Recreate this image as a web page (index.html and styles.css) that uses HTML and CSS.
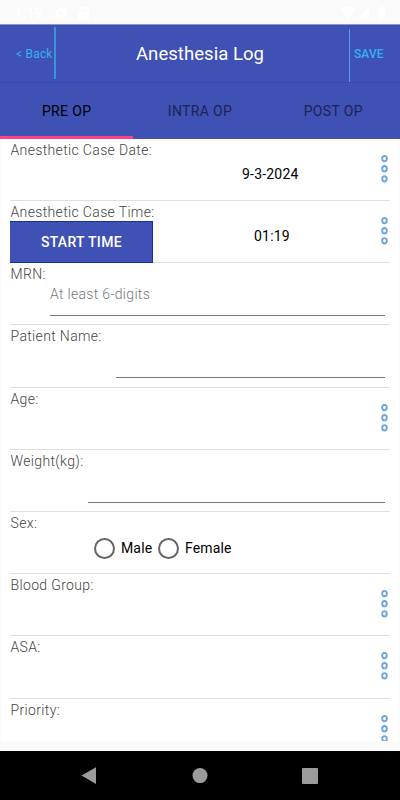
FILE: index.html
```html
<!DOCTYPE html>
<html lang="en">
<head>
<meta charset="utf-8">
<title>Anesthesia Log</title>
<link rel="stylesheet" href="styles.css">
</head>
<body>
<svg class="defs" width="0" height="0" aria-hidden="true">
  <symbol id="more" viewBox="0 0 10 32">
    <g fill="#fff" stroke="#6fa5d8" stroke-width="1.9" stroke-linejoin="round">
      <ellipse cx="4.5" cy="5.6" rx="2.3" ry="2.7"/>
      <ellipse cx="4.5" cy="15.7" rx="2.3" ry="2.7"/>
      <ellipse cx="4.5" cy="25.8" rx="2.3" ry="2.7"/>
    </g>
  </symbol>
</svg>
<div class="status">
  <span class="clock">1:19</span>
  <svg class="gear" width="14" height="14" viewBox="0 0 14 14"><circle cx="7" cy="7" r="3.7" fill="none" stroke="#fff" stroke-width="3"/><circle cx="7" cy="7" r="5.3" fill="none" stroke="#fff" stroke-width="2" stroke-dasharray="3 2.55"/></svg>
  <svg class="card" width="11" height="13" viewBox="0 0 11 13"><path fill="#fff" d="M4 0h6q1 0 1 1v11q0 1-1 1H1q-1 0-1-1V4z"/><path stroke="#f6f6f6" d="M4.5 2v2.5M6.5 2v2.5M8.5 2v2.5"/></svg>
  <svg class="signals" width="46" height="14" viewBox="0 0 46 14"><path fill="#fff" d="M0 3Q8-3 16 3L8 13ZM29 1v12H17ZM38 2h2V0h3v2h2v11h-7z"/></svg>
</div>
<header class="bar">
  <span class="back">&lt; Back</span>
  <h1>Anesthesia Log</h1>
  <span class="save">SAVE</span>
</header>
<nav class="tabs">
  <span class="tab active">PRE OP</span><span class="tab">INTRA OP</span><span class="tab">POST OP</span>
</nav>
<main class="form">
  <section class="row"><label>Anesthetic Case Date:</label><span class="value date">9-3-2024</span><svg class="more"><use href="#more"/></svg></section>
  <section class="row"><label>Anesthetic Case Time:</label><button class="start">START TIME</button><span class="value time">01:19</span><svg class="more"><use href="#more"/></svg></section>
  <section class="row"><label>MRN:</label><div class="input mrn">At least 6-digits</div></section>
  <section class="row"><label>Patient Name:</label><div class="input name"></div></section>
  <section class="row"><label>Age:</label><svg class="more"><use href="#more"/></svg></section>
  <section class="row"><label>Weight(kg):</label><div class="input weight"></div></section>
  <section class="row"><label>Sex:</label><div class="radios"><i class="radio"></i><span class="male">Male</span><i class="radio"></i><span>Female</span></div></section>
  <section class="row"><label>Blood Group:</label><svg class="more"><use href="#more"/></svg></section>
  <section class="row"><label>ASA:</label><svg class="more"><use href="#more"/></svg></section>
  <section class="row"><label>Priority:</label><svg class="more"><use href="#more"/></svg></section>
</main>
<footer class="nav">
  <svg width="400" height="49" viewBox="0 0 400 49"><g fill="#9b9b9b"><path d="M81.5 24.6 96 16.3V33Z"/><circle cx="200" cy="24.6" r="7.5"/><rect x="302" y="17" width="16" height="16" rx="1"/></g></svg>
</footer>
</body>
</html>
```
FILE: styles.css
```css
* { box-sizing: border-box; }
body {
  margin: 0;
  width: 400px;
  height: 800px;
  overflow: hidden;
  display: flex;
  flex-direction: column;
  background: #fafafa;
  font-family: Roboto, "Liberation Sans", sans-serif;
  font-size: 14px;
}
.defs { position: absolute; }
.status {
  height: 24px;
  flex: none;
  display: flex;
  align-items: center;
  padding: 2px 14px 0 15px;
  color: #fff;
  background: #fafafa;
}
.clock { width: 39px; font-size: 14px; font-weight: 500; }
.card { margin-left: 10px; }
.signals { margin-left: auto; }
.bar {
  height: 59px;
  flex: none;
  display: grid;
  grid-template-columns: 56px 1fr 51px;
  align-items: center;
  background: #3f51b5;
  border-top: 1px solid #9299c0;
  border-bottom: 1px solid #3949a5;
}
.back {
  align-self: start;
  height: 52px;
  margin-top: 2px;
  padding-left: 16px;
  font-size: 12px;
  line-height: 54px;
  color: #35b1e7;
  border-right: 2px solid #3795d8;
  letter-spacing: .2px;
}
h1 {
  margin: 0;
  padding-right: 5px;
  text-align: center;
  font-size: 18.5px;
  font-weight: 400;
  color: #fff;
  letter-spacing: .05px;
}
.save {
  align-self: end;
  height: 53px;
  padding-left: 4px;
  font-size: 12px;
  font-weight: 500;
  line-height: 50px;
  color: #35b1e7;
  border-left: 1px solid #48a5ec;
  letter-spacing: .1px;
}
.tabs {
  height: 56px;
  flex: none;
  display: grid;
  grid-template-columns: repeat(3, 1fr);
  background: #3f51b5;
}
.tab {
  height: 56px;
  text-align: center;
  line-height: 56px;
  color: #1c2451;
  letter-spacing: .35px;
}
.active { color: #000; border-bottom: 3px solid #ff4081; }
.form {
  height: 602px;
  flex: none;
  overflow: hidden;
  margin: 0 1px;
  padding: 0 9px;
  background: #fff;
}
.row {
  height: 62.22px;
  position: relative;
  border-bottom: 1px solid #dfdfdf;
}
.row:first-child { height: 61.9px; }
label {
  display: block;
  height: 20px;
  padding-left: .5px;
  line-height: 22px;
  color: #444;
  font-weight: 300;
  letter-spacing: .35px;
}
.value { position: absolute; top: 26px; line-height: 19px; color: #000; letter-spacing: .2px; }
.date { left: 232px; }
.time { left: 244px; }
.more { position: absolute; right: 0; top: 14px; width: 10px; height: 32px; }
.start {
  display: block;
  width: 143px;
  height: 42px;
  margin: 0 0 0 .4px;
  padding: 0;
  position: relative;
  z-index: 1;
  color: #fff;
  background: #3f51b5;
  border: 1px solid #1430a6;
  border-width: 1px 1px 1px 0;
  font: 500 14px Roboto, sans-serif;
  letter-spacing: .3px;
}
.input {
  height: 33px;
  margin-right: 5px;
  border-bottom: 1px solid #777;
  color: #777;
  line-height: 23px;
  font-weight: 300;
  letter-spacing: .32px;
}
.mrn { margin-left: 40px; }
.name { margin-left: 106px; }
.weight { margin-left: 78px; }
.radios { display: flex; align-items: center; margin-left: 84px; height: 33px; color: #000; letter-spacing: .15px; }
.radio { width: 21px; height: 21px; border: 2px solid #666; border-radius: 50%; margin-right: 6px; }
.male { width: 37px; }
.nav { height: 49px; margin-top: auto; background: #000; }
.nav svg { display: block; }
```
